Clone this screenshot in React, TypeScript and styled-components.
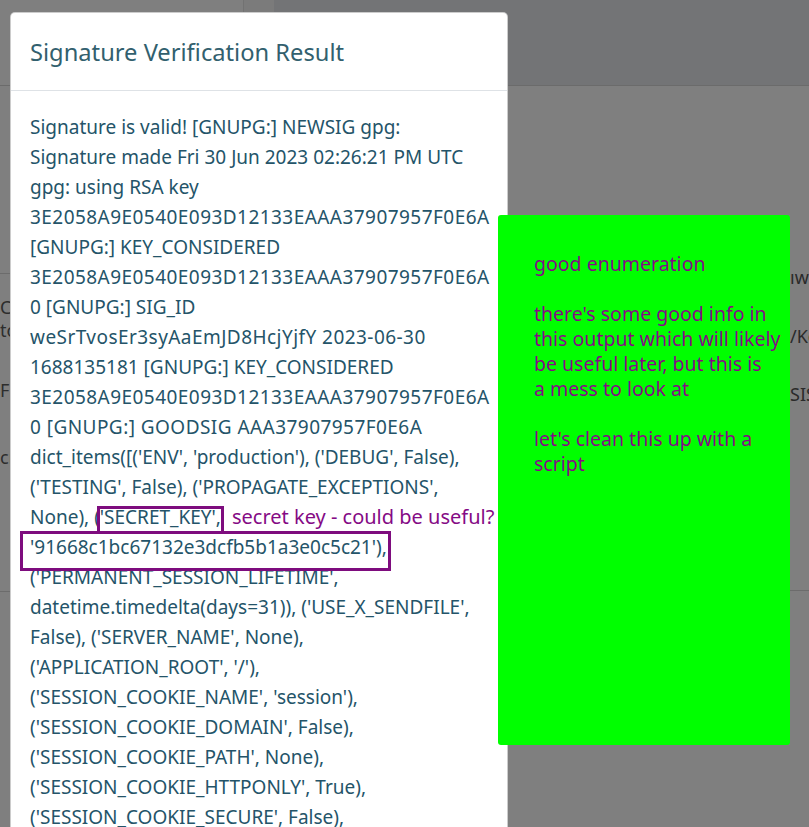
import React from "react";
import styled, { createGlobalStyle } from "styled-components";

const GlobalStyle = createGlobalStyle`
  html, body { margin: 0; padding: 0; }
  body {
    width: 809px;
    height: 827px;
    overflow: hidden;
    background: #ffffff;
    font-family: "Noto Sans", "DejaVu Sans", sans-serif;
  }
`;

const Viewport = styled.div`
  position: relative;
  width: 809px;
  height: 827px;
  overflow: hidden;
  background: #ffffff;
`;

/* ---------- page behind the dialog ---------- */
const TopBar = styled.header`
  display: flex;
  height: 86px;
  box-sizing: border-box;
  border-bottom: 1px solid #d6d6d6;
`;

const Brand = styled.div`
  width: 274px;
  display: flex;
  justify-content: flex-end;
  background: #fefefe;
`;

const BrandToggle = styled.div`
  width: 31px;
  box-sizing: border-box;
  border-left: 1px solid #e4e4e4;
  background: #f6f6f6;
`;

const NavArea = styled.div`
  flex: 1;
  background: #e6e8ec;
`;

const Main = styled.main`
  display: flex;
`;

const LeftCol = styled.section`
  width: 10px;
  flex-shrink: 0;
  overflow: hidden;
  padding-top: 187px;
`;

const Card = styled.div`
  height: 319px;
  box-sizing: border-box;
  border-top: 1px solid #d8d8d8;
  border-bottom: 1px solid #d8d8d8;
  padding-top: 22px;
  display: flex;
  flex-direction: column;
`;

const CardText = styled.p<{ $gap: number }>`
  margin: ${(p) => p.$gap}px 0 0;
  font-size: 18px;
  line-height: 23px;
  color: #5a5a5a;
  white-space: nowrap;
`;

const RightCol = styled.section`
  flex: 1;
  min-width: 0;
  padding-top: 180px;
`;

const RightBlock = styled.div`
  height: 325px;
  box-sizing: border-box;
  border-bottom: 1px solid #d8d8d8;
  padding-left: 780px;
  display: flex;
  flex-direction: column;
  overflow: hidden;
`;

const RightText = styled.p<{ $gap: number }>`
  margin: ${(p) => p.$gap}px 0 0;
  font-size: 18px;
  line-height: 23px;
  color: #555;
  white-space: nowrap;
`;

const Backdrop = styled.div`
  position: absolute;
  inset: 0;
  background: rgba(0, 0, 0, 0.5);
`;

/* ---------- dialog ---------- */
const Dialog = styled.div`
  position: absolute;
  left: 10px;
  top: 12px;
  width: 498px;
  height: 900px;
  box-sizing: border-box;
  background: #ffffff;
  border: 1px solid rgba(0, 0, 0, 0.2);
  border-radius: 5px;
  overflow: hidden;
`;

const DialogHeader = styled.div`
  height: 78px;
  box-sizing: border-box;
  display: flex;
  align-items: center;
  padding: 0 19px;
  border-bottom: 1px solid #dee2e6;
`;

const DialogTitle = styled.h5`
  margin: 0;
  font-size: 23.7px;
  font-weight: 400;
  color: #32606e;
`;

const DialogBody = styled.div`
  padding: 21px 19px;
  font-size: 19px;
  color: #245469;
`;

const Line = styled.div<{ $hex?: boolean }>`
  height: 30px;
  line-height: 30px;
  white-space: nowrap;
  letter-spacing: ${(p) => (p.$hex ? "0.45px" : "normal")};
`;

const Marked = styled.span<{ $l: number; $r: number; $t: number; $b: number }>`
  position: relative;
  display: inline-block;
  height: 30px;
  &::after {
    content: "";
    position: absolute;
    left: ${(p) => p.$l}px;
    right: ${(p) => p.$r}px;
    top: ${(p) => p.$t}px;
    bottom: ${(p) => p.$b}px;
    border: 3px solid #7e0c7e;
    pointer-events: none;
  }
`;

const Remark = styled.span`
  margin-left: 11px;
  font-size: 20px;
  color: #850a85;
`;

/* ---------- green sticky note ---------- */
const Sticky = styled.aside`
  position: absolute;
  z-index: 2;
  left: 498px;
  top: 215px;
  width: 292px;
  height: 530px;
  box-sizing: border-box;
  padding: 36px 0 0 36px;
  background: #00ff00;
  border-radius: 3px;
  color: #850a85;
  font-size: 19.5px;
`;

const StickyPara = styled.div`
  margin-bottom: 25px;
`;

const StickyLine = styled.div`
  height: 25px;
  line-height: 25px;
  white-space: nowrap;
`;

type BodyLine = { text: string; hex?: boolean };

const bodyLines: BodyLine[] = [
  { text: "Signature is valid! [GNUPG:] NEWSIG gpg:" },
  { text: "Signature made Fri 30 Jun 2023 02:26:21 PM UTC" },
  { text: "gpg: using RSA key" },
  { text: "3E2058A9E0540E093D12133EAAA37907957F0E6A", hex: true },
  { text: "[GNUPG:] KEY_CONSIDERED" },
  { text: "3E2058A9E0540E093D12133EAAA37907957F0E6A", hex: true },
  { text: "0 [GNUPG:] SIG_ID" },
  { text: "weSrTvosEr3syAaEmJD8HcjYjfY 2023-06-30", hex: true },
  { text: "1688135181 [GNUPG:] KEY_CONSIDERED" },
  { text: "3E2058A9E0540E093D12133EAAA37907957F0E6A", hex: true },
  { text: "0 [GNUPG:] GOODSIG AAA37907957F0E6A", hex: true },
  { text: "dict_items([('ENV', 'production'), ('DEBUG', False)," },
  { text: "('TESTING', False), ('PROPAGATE_EXCEPTIONS'," },
];

const tailLines: string[] = [
  "('PERMANENT_SESSION_LIFETIME',",
  "datetime.timedelta(days=31)), ('USE_X_SENDFILE',",
  "False), ('SERVER_NAME', None),",
  "('APPLICATION_ROOT', '/'),",
  "('SESSION_COOKIE_NAME', 'session'),",
  "('SESSION_COOKIE_DOMAIN', False),",
  "('SESSION_COOKIE_PATH', None),",
  "('SESSION_COOKIE_HTTPONLY', True),",
  "('SESSION_COOKIE_SECURE', False),",
];

const stickyParas: string[][] = [
  ["good enumeration"],
  [
    "there's some good info in",
    "this output which will likely",
    "be useful later, but this is",
    "a mess to look at",
  ],
  ["let's clean this up with a", "script"],
];

export default function App() {
  return (
    <Viewport>
      <GlobalStyle />
      <TopBar>
        <Brand>
          <BrandToggle />
        </Brand>
        <NavArea />
      </TopBar>
      <Main>
        <LeftCol>
          <Card>
            <CardText $gap={0}>Ce</CardText>
            <CardText $gap={0}>to</CardText>
            <CardText $gap={37}>Fl</CardText>
            <CardText $gap={44}>cr</CardText>
          </Card>
        </LeftCol>
        <RightCol>
          <RightBlock>
            <RightText $gap={0}>ıw</RightText>
            <RightText $gap={36}>/Ke</RightText>
            <RightText $gap={35}>SIS</RightText>
          </RightBlock>
        </RightCol>
      </Main>
      <Backdrop />

      <Dialog>
        <DialogHeader>
          <DialogTitle>Signature Verification Result</DialogTitle>
        </DialogHeader>
        <DialogBody>
          {bodyLines.map((l, i) => (
            <Line key={i} $hex={l.hex}>
              {l.text}
            </Line>
          ))}
          <Line>
            None), (
            <Marked $l={-3} $r={-3} $t={4} $b={-2}>
              'SECRET_KEY',
            </Marked>
            <Remark>secret key - could be useful?</Remark>
          </Line>
          <Line>
            <Marked $l={-10} $r={-4} $t={-1} $b={-9}>
              '91668c1bc67132e3dcfb5b1a3e0c5c21'),
            </Marked>
          </Line>
          {tailLines.map((l, i) => (
            <Line key={i}>{l}</Line>
          ))}
        </DialogBody>
      </Dialog>

      <Sticky>
        {stickyParas.map((para, i) => (
          <StickyPara key={i}>
            {para.map((l, j) => (
              <StickyLine key={j}>{l}</StickyLine>
            ))}
          </StickyPara>
        ))}
      </Sticky>
    </Viewport>
  );
}
